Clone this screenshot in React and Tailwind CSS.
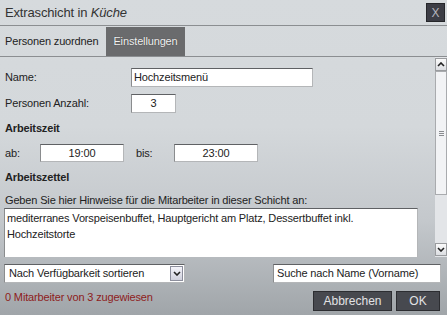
import React from "react";

function Chevron({ down = true }) {
  return (
    <svg width="8" height="5" viewBox="0 0 8 5" className="block">
      <path
        d={down ? "M1 1 L4 4 L7 1" : "M1 4 L4 1 L7 4"}
        fill="none"
        stroke="#222"
        strokeWidth="1.6"
      />
    </svg>
  );
}

const inputCls =
  "bg-white border border-[#b4b6b8] border-t-[#5f6164] border-l-[#8a8c8e] flex items-center";

export default function App() {
  return (
    <div className="w-[447px] h-[315px] overflow-hidden flex flex-col font-['Liberation_Sans',Arial,sans-serif] text-[11px] tracking-[-0.15px] text-[#222] bg-[linear-gradient(to_bottom,#d6dadd_0%,#d4d8db_40%,#c4c8cc_70%,#a0a5a9_100%)]">
      {/* Title bar */}
      <div className="h-[26px] shrink-0 border-b border-[#8b8e91] flex items-center justify-between pl-[5px] pr-[2px]">
        <div className="text-[13px] text-[#333] leading-none">
          Extraschicht in <i>Küche</i>
        </div>
        <div className="w-[19px] h-[19px] bg-[#3c3d45] border border-[#25262a] text-[#b4b4bc] text-[12px] tracking-normal flex items-center justify-center leading-none">
          X
        </div>
      </div>

      {/* Tabs */}
      <div className="h-[31px] shrink-0 border-b border-[#8b8e91] flex items-end">
        <div className="w-[106px] h-[29px] pl-[5px] flex items-center text-[#222]">
          Personen zuordnen
        </div>
        <div className="w-[79px] h-[29px] bg-[#6a6b6d] text-[#f2f2f2] flex items-center justify-center [text-shadow:0_0_1px_#333]">
          Einstellungen
        </div>
      </div>

      {/* Content with scrollbar */}
      <div className="h-[200px] shrink-0 flex">
        <div className="flex-1 overflow-hidden pl-[5px] pt-[11px]">
          <div className="flex items-center h-[19px]">
            <div className="w-[126px]">Name:</div>
            <div className={`${inputCls} w-[182px] h-[19px] pl-[2px]`}>Hochzeitsmenü</div>
          </div>
          <div className="flex items-center h-[19px] mt-[7px]">
            <div className="w-[126px]">Personen Anzahl:</div>
            <div className={`${inputCls} w-[45px] h-[19px] justify-center`}>3</div>
          </div>
          <div className="mt-[8px] h-[14px] leading-[14px] font-bold">Arbeitszeit</div>
          <div className="mt-[9px] h-[18px] flex items-center">
            <div className="w-[35px]">ab:</div>
            <div className={`${inputCls} w-[84px] h-[18px] justify-center`}>19:00</div>
            <div className="ml-[12px] w-[38px]">bis:</div>
            <div className={`${inputCls} w-[84px] h-[18px] justify-center`}>23:00</div>
          </div>
          <div className="mt-[8px] h-[14px] leading-[14px] font-bold">Arbeitszettel</div>
          <div className="mt-[9px] h-[14px] leading-[14px]">
            Geben Sie hier Hinweise für die Mitarbeiter in dieser Schicht an:
          </div>
          <div className={`${inputCls} !items-start -ml-[1px] mt-[1px] w-[414px] h-[60px] pl-[2px] pt-[1px] leading-[16px]`}>
            <div className="w-[400px]">
              mediterranes Vorspeisenbuffet, Hauptgericht am Platz, Dessertbuffet inkl. Hochzeitstorte
            </div>
          </div>
        </div>

        {/* Scrollbar */}
        <div className="w-[12px] shrink-0 flex flex-col pt-[1px] pb-[1px] bg-[#e3e5e8]">
          <div className="h-[13px] border border-[#9a9c9f] bg-[linear-gradient(to_bottom,#fafafa,#dcdee2)] flex items-center justify-center">
            <Chevron down={false} />
          </div>
          <div className="flex-1 flex flex-col">
            <div className="h-[124px] border border-[#a9abae] bg-[#f2f3f5] flex items-center justify-center">
              <div className="w-[5px] flex flex-col gap-[1px]">
                <div className="h-px bg-[#8a8c90]" />
                <div className="h-px bg-[#8a8c90]" />
                <div className="h-px bg-[#8a8c90]" />
              </div>
            </div>
          </div>
          <div className="h-[13px] border border-[#9a9c9f] bg-[linear-gradient(to_bottom,#fafafa,#dcdee2)] flex items-center justify-center">
            <Chevron down />
          </div>
        </div>
      </div>

      {/* Bottom */}
      <div className="flex-1 flex flex-col">
        <div className="pt-[7px] flex justify-between pl-[4px] pr-[6px]">
          <div className={`${inputCls} w-[181px] h-[19px] pl-[4px] pr-[1px] justify-between`}>
            <span>Nach Verfügbarkeit sortieren</span>
            <div className="w-[13px] h-[15px] border border-[#8c8e9c] bg-[linear-gradient(to_bottom,#f4f4fa,#cfd0dc)] flex items-center justify-center">
              <Chevron down />
            </div>
          </div>
          <div className={`${inputCls} w-[168px] h-[19px] pl-[3px]`}>Suche nach Name (Vorname)</div>
        </div>
        <div className="mt-[8px] flex justify-between items-start pl-[5px] pr-[7px]">
          <div className="text-[#8e1c1c] leading-[14px] mt-[-1px]">0 Mitarbeiter von 3 zugewiesen</div>
          <div className="flex gap-[4px]">
            <div className="w-[79px] h-[20px] bg-[#47494f] border border-[#2c2d31] text-[#e2e2e4] text-[12px] tracking-normal flex items-center justify-center">
              Abbrechen
            </div>
            <div className="w-[44px] h-[20px] bg-[#47494f] border border-[#2c2d31] text-[#e2e2e4] text-[12px] tracking-normal flex items-center justify-center">
              OK
            </div>
          </div>
        </div>
      </div>
    </div>
  );
}
